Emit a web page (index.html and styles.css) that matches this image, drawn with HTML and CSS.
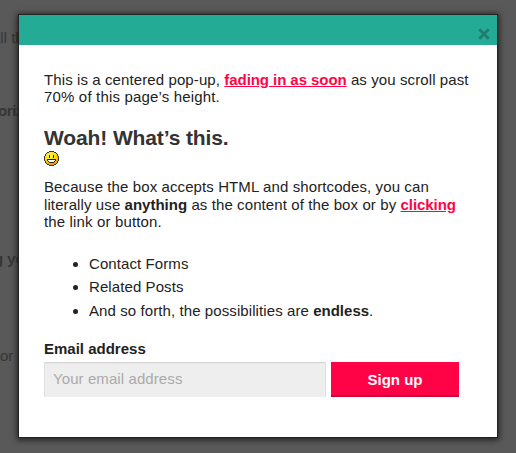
FILE: index.html
```
<!DOCTYPE html>
<html lang="en">
<head>
<meta charset="utf-8">
<title>Pop-up</title>
<link rel="stylesheet" href="styles.css">
</head>
<body>
<div class="page" aria-hidden="true">
  <p class="peek peek-a">all th</p>
  <p class="peek peek-b"><b>oriz</b></p>
  <p class="peek peek-c"><b>g yo</b></p>
  <p class="peek peek-d">or a</p>
</div>
<main class="popup">
  <header class="popup-bar">
    <svg class="close" viewBox="0 0 12 12" role="img" aria-label="Close"><path d="M1.3 1.3 10.7 10.7M10.7 1.3 1.3 10.7"/></svg>
  </header>
  <div class="content">
    <p class="intro"><span class="line l1">This is a centered pop-up, <a href="#">fading in as soon</a> as you scroll past</span><span class="line l2">70% of this page’s height.</span></p>
    <h2>Woah! What’s this.</h2>
    <svg class="smiley" viewBox="0 0 15 15" shape-rendering="crispEdges">
      <defs><radialGradient id="face" cx="40%" cy="30%" r="75%"><stop offset="0" stop-color="#fff45a"/><stop offset=".55" stop-color="#ffdf00"/><stop offset="1" stop-color="#f08a00"/></radialGradient></defs>
      <path fill="#303440" d="M5 0h5v1h2v1h1v1h1v2h1v5h-1v2h-1v1h-1v1h-2v1H5v-1H3v-1H2v-1H1v-2H0V5h1V3h1V2h1V1h2z"/>
      <path fill="url(#face)" d="M5 1h5v1h2v1h1v2h1v5h-1v2h-1v1h-2v1H5v-1H3v-1H2v-2H1V5h1V3h1V2h2z"/>
      <path fill="#222" d="M5 4h1v3H5zM9 4h1v3H9zM3 8h9v2h-1v1h-1v1H5v-1H4v-1H3z"/>
      <path fill="#fff" d="M4 9h7v1h-1v1H5v-1H4z"/>
    </svg>
    <p class="about"><span class="line l3">Because the box accepts HTML and shortcodes, you can</span><span class="line l4">literally use <b>anything</b> as the content of the box or by <a href="#">clicking</a></span><span class="line l5">the link or button.</span></p>
    <ul>
      <li>Contact Forms</li>
      <li>Related Posts</li>
      <li>And so forth, the possibilities are <b>endless</b>.</li>
    </ul>
    <form>
      <label for="email">Email address</label>
      <div class="fields">
        <input id="email" type="email" placeholder="Your email address">
        <button type="button">Sign up</button>
      </div>
    </form>
  </div>
</main>
</body>
</html>
```
FILE: styles.css
```
* { box-sizing: border-box; }
body {
  margin: 0;
  height: 453px;
  overflow: hidden;
  padding: 14px 18px;
  background: #595959;
  color: #222;
  font: 15px/17.5px "Liberation Sans", Arial, sans-serif;
}
p, h2, ul { margin: 0; }
.peek { position: absolute; color: #363636; white-space: nowrap; }
.peek-a { left: -8px; top: 29px; }
.peek-b { left: -2px; top: 102px; letter-spacing: -.4px; }
.peek-c { left: -6px; top: 250px; }
.peek-d { left: 0; top: 347px; }
.popup {
  position: relative;
  width: 480px;
  height: 424px;
  border: 1px solid #222;
  background: #fff;
  box-shadow: 0 1px 6px 1px rgba(0, 0, 0, .65);
}
.popup-bar {
  display: flex;
  justify-content: flex-end;
  height: 30px;
  padding: 13px 7px 0 0;
  background: #24ab96;
}
.close { width: 12px; height: 12px; fill: none; stroke: #217c6e; stroke-width: 2.8; }
.content { padding: 26px 25px 0; }
.line { display: block; width: max-content; letter-spacing: .1px; }
.l1 { line-height: 17px; }
.l2 { line-height: 18px; letter-spacing: .17px; }
.l5 { letter-spacing: .15px; }
.line b { letter-spacing: 0; }
a { color: #ff0346; font-weight: bold; text-decoration: underline; letter-spacing: -.06px; }
h2 {
  width: max-content;
  margin-top: 19px;
  color: #333;
  font-size: 21px;
  line-height: 26px;
  letter-spacing: -.12px;
}
.smiley { display: block; width: 15px; height: 15px; }
.about { margin-top: 12px; }
ul { margin-top: 21px; padding-left: 45px; line-height: 23.5px; letter-spacing: .09px; }
li b { letter-spacing: 0; }
label { display: block; margin-top: 18px; font-weight: bold; }
.fields { display: flex; gap: 5px; margin-top: 4px; }
input {
  width: 282px;
  height: 35px;
  padding: 0 9px 2px;
  border: 0;
  background: #eee;
  box-shadow: inset 1px 0 #e0e0e0, inset -1px 0 #e0e0e0, inset 0 1px #d6d6d6, inset 0 2px #e6e6e6;
  font: inherit;
  letter-spacing: .09px;
}
input::placeholder { color: #aaa; opacity: 1; }
button {
  width: 128px;
  height: 35px;
  padding: 1px 0 0;
  border: 0;
  background: #ff0346;
  box-shadow: inset 0 -2px #cc0338;
  color: #fff;
  font: bold 15px "Liberation Sans", Arial, sans-serif;
}
```
